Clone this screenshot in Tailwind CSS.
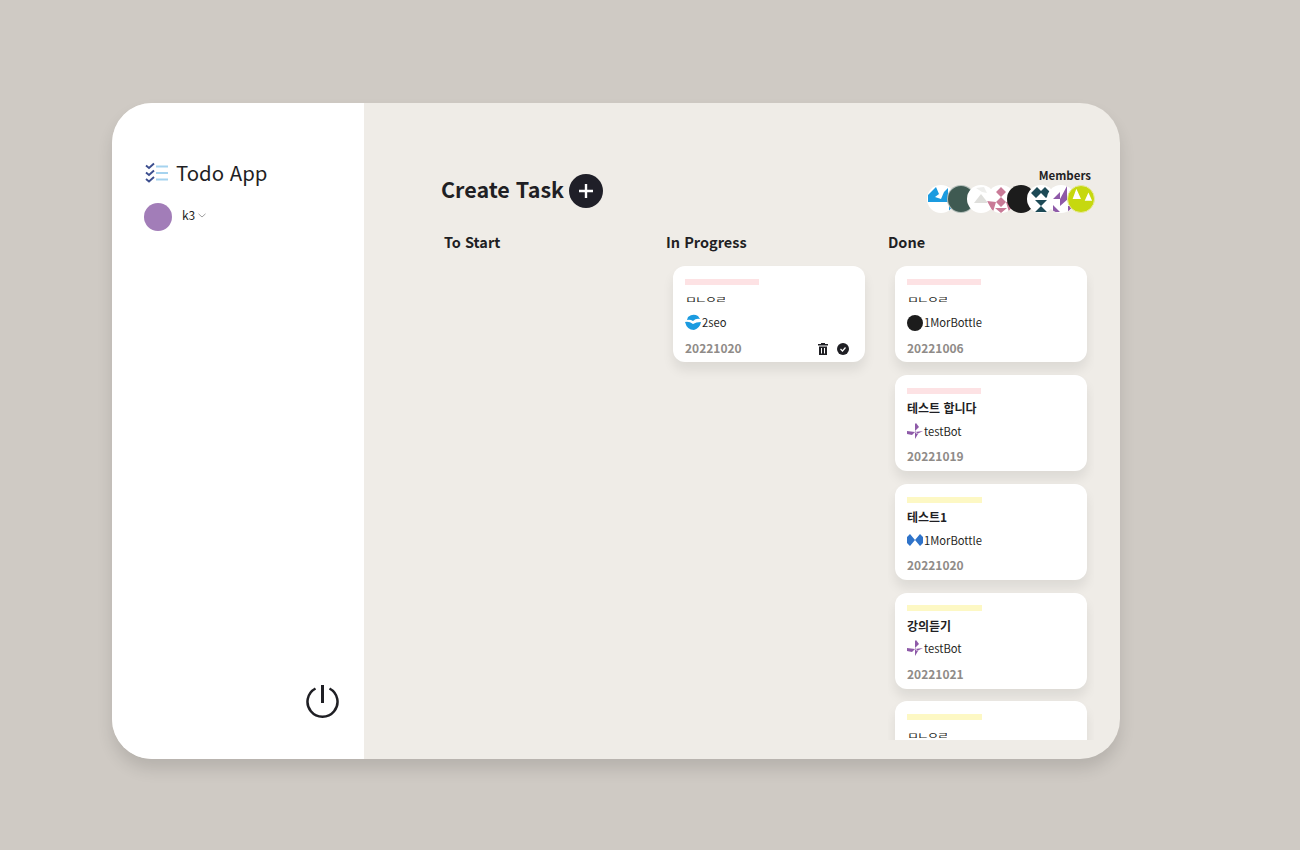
<!DOCTYPE html>
<html lang="ko">
<head>
<meta charset="utf-8">
<script src="https://cdn.jsdelivr.net/npm/@tailwindcss/browser@4"></script>
</head>
<body class="m-0 h-[850px] w-[1300px] overflow-hidden bg-[#cfcac4] font-['Noto_Sans_CJK_KR','Noto_Sans',sans-serif] text-[#1f1f24]">
<div class="pt-[103px] pl-[112px]">
  <div class="flex h-[656px] w-[1008px] overflow-hidden rounded-[40px] bg-[#efece7] shadow-[0_10px_16px_rgba(0,0,0,0.12)]">
    <aside class="flex w-[252px] shrink-0 flex-col bg-white pl-[32px] pt-[56px] pr-[24px] pb-[40px]">
      <div class="flex h-[28px] items-center gap-[7px]">
        <svg width="25" height="22" viewBox="0 0 25 22" fill="none">
          <path d="M2 3.500l3 2.500 5-4.500M2 10.500l3 2.500 5-4.500M2 17l3 2.500 5-4.500" stroke="#3d4f8f" stroke-width="1.900"/>
          <path d="M12 4.500h12M12 11h12M12 17.500h12" stroke="#a5d3ef" stroke-width="2"/>
        </svg>
        <span class="pb-[2px] text-[20.400px] leading-[28px]">Todo App</span>
      </div>
      <div class="mt-[16px] flex items-center">
        <div class="h-[28px] w-[28px] rounded-full bg-[#a27db8]"></div>
        <span class="ml-[10px] pb-[4px] text-[12px] leading-[16px]">k3</span>
        <svg class="mb-[4px] ml-[3px]" width="8" height="5" viewBox="0 0 8 5" fill="none"><path d="M.5.800L4 4 7.500.800" stroke="#777" stroke-width=".7"/></svg>
      </div>
      <div class="mt-auto flex justify-end">
        <svg width="34" height="34" viewBox="0 0 34 34" fill="none" stroke="#1f1f24" stroke-width="2.500">
          <path d="M9.500 3.500A15 15 0 1 0 23.500 3.500"/>
          <path d="M16.500 0v18" stroke-width="3"/>
        </svg>
      </div>
    </aside>
    <main class="flex min-w-0 flex-1 flex-col pl-[77px] pr-[26px] pt-[56px]">
      <div class="flex h-[70px] items-start justify-between">
        <div class="mt-[2px] flex h-[60px] items-center gap-[5px]">
          <span class="pb-[4px] text-[21.500px] leading-[32px] font-semibold">Create Task</span>
          <span class="flex h-[34px] w-[34px] items-center justify-center rounded-full bg-[#1f1f28]">
            <svg width="16" height="16" viewBox="0 0 16 16"><path d="M8 1v14M1 8h14" stroke="#fff" stroke-width="2.400"/></svg>
          </span>
        </div>
        <div class="flex flex-col items-end pt-[8px]">
          <span class="mr-[3px] text-[11.500px] leading-[16px] font-semibold">Members</span>
          <div class="mt-[2px] -mr-[1px] flex h-[28px]">
            <svg class="relative z-[1] rounded-full bg-white" width="28" height="28" viewBox="0 0 28 28"><path d="M1 10L9 2l3 7-4 3 6 2 3-7 4-4v14H1z" fill="#1b9be0"/><path d="M22 12h6v7l-6 7z" fill="#1b9be0"/></svg>
            <svg class="relative z-[2] -ml-[8px] rounded-full border border-white/60 bg-[#3f5a52]" width="28" height="28" viewBox="0 0 28 28"></svg>
            <svg class="relative z-[3] -ml-[8px] rounded-full bg-white" width="28" height="28" viewBox="0 0 28 28"><path d="M7 18L14 9l7 9z" fill="#dfdfdc"/><path d="M9 3l8-1 3 6-5-1z" fill="#eeeeec"/></svg>
            <svg class="relative z-[4] -ml-[8px] rounded-full bg-white" width="28" height="28" viewBox="0 0 28 28"><path d="M14 2l5 5-5 5-5-5zM14 12l5 5-5 5-5-5zM0 16l9 1-3 10zM28 16l-9 1 3 10zM8 23h12l-6 5z" fill="#c97a97"/></svg>
            <svg class="relative z-[5] -ml-[8px] rounded-full bg-[#1c1c1c]" width="28" height="28" viewBox="0 0 28 28"></svg>
            <svg class="relative z-[6] -ml-[8px] rounded-full bg-white" width="28" height="28" viewBox="0 0 28 28"><path d="M4 8l6-6 4 4 4-4 6 6-5 5-5-5-5 5zM8 15h12l-6 6 6 6H8l6-6z" fill="#1d4a56"/></svg>
            <svg class="relative z-[7] -ml-[8px] rounded-full bg-white" width="28" height="28" viewBox="0 0 28 28"><path d="M20 1v13h-7zM6 14l7-7v7zM13 14h8l-8 7zM6 20l7 7H6zM21 21l6-1-6 7z" fill="#8e5aa8"/></svg>
            <svg class="relative z-[8] -ml-[8px] rounded-full border border-[#e8e8a0] bg-[#c6d80f]" width="28" height="28" viewBox="0 0 28 28"><path d="M9 3l5 11H5zM22 7l4 9h-8z" fill="#fff"/></svg>
          </div>
        </div>
      </div>
      <div class="mt-[3px] grid min-h-0 flex-1 grid-cols-[222px_222px_1fr]">
        <section class="flex flex-col pl-[3px]">
          <h2 class="text-[14.500px] leading-[20px] font-semibold">To Start</h2>
        </section>
        <section class="flex flex-col pl-[3px]">
          <h2 class="text-[14.500px] leading-[20px] font-semibold">In Progress</h2>
          <div class="mt-[14px] pl-[7px]">
            <article class="relative h-[96px] w-[192px] rounded-[12px] bg-white px-[12px] pt-[13px] shadow-[0_8px_12px_rgba(0,0,0,0.08)]">
              <div class="h-[6px] w-[74px] bg-[#fde2e4]"></div>
              <div class="mt-[7px] h-[16px] text-[13px] leading-[16px]"><span class="inline-block origin-left scale-y-[0.7] tracking-[-2px]">ㅁㄴㅇㄹ</span></div>
              <div class="mt-[6px] flex h-[16px] items-center text-[11.200px] leading-[16px]">
                <svg width="16" height="16" viewBox="0 0 16 16"><path d="M3 3Q8-1 13 2l2 3Q11 4 8 7 5 5 2 6zM0 8q4-1 8 2 3-2 8-2-1 6-7 8-7 0-9-8z" fill="#1b9be0"/></svg>
                <span class="ml-[1px]">2seo</span>
              </div>
              <div class="mt-[10px] text-[12px] leading-[16px] font-semibold text-[#8f8b88]">20221020</div>
              <div class="absolute right-[16px] bottom-[6px] flex items-center gap-[8px]">
                <svg width="12" height="14" viewBox="0 0 12 14"><path d="M4 1h4v1h3v1.500H1V2h3zM2 4.500h8V13H2z" fill="#1f1f24"/><path d="M4.500 6v5.500M7.500 6v5.500" stroke="#fff"/></svg>
                <svg width="12" height="12" viewBox="0 0 12 12"><circle cx="6" cy="6" r="6" fill="#1f1f24"/><path d="M3.500 6l2 2 3-3.500" stroke="#fff" fill="none" stroke-width="1.200"/></svg>
              </div>
            </article>
          </div>
        </section>
        <section class="flex min-h-0 flex-col pl-[3px]">
          <h2 class="text-[14.500px] leading-[20px] font-semibold">Done</h2>
          <div class="mt-[14px] flex h-[474px] flex-col gap-[13px] overflow-hidden pl-[7px] pb-0">
            <article class="h-[96px] w-[192px] shrink-0 rounded-[12px] bg-white px-[12px] pt-[13px] shadow-[0_8px_12px_rgba(0,0,0,0.08)]">
              <div class="h-[6px] w-[74px] bg-[#fde2e4]"></div>
              <div class="mt-[7px] h-[16px] text-[13px] leading-[16px]"><span class="inline-block origin-left scale-y-[0.7] tracking-[-2px]">ㅁㄴㅇㄹ</span></div>
              <div class="mt-[6px] flex h-[16px] items-center text-[11.200px] leading-[16px]"><span class="mt-[2px] h-[16px] w-[16px] rounded-full bg-[#1c1c1c]"></span><span class="ml-[1px]">1MorBottle</span></div>
              <div class="mt-[10px] text-[12px] leading-[16px] font-semibold text-[#8f8b88]">20221006</div>
            </article>
            <article class="h-[96px] w-[192px] shrink-0 rounded-[12px] bg-white px-[12px] pt-[13px] shadow-[0_8px_12px_rgba(0,0,0,0.08)]">
              <div class="h-[6px] w-[74px] bg-[#fde2e4]"></div>
              <div class="mt-[5px] h-[18px] text-[12px] leading-[18px] font-semibold">테스트 합니다</div>
              <div class="mt-[6px] flex h-[16px] items-center text-[11.200px] leading-[16px]">
                <svg width="16" height="16" viewBox="0 0 16 16"><path d="M9 0l3 4-4 4V1zM0 8l8 1-3 3-5-1zM16 8l-8 1 2 2zM8 8l3 3-3 5z" fill="#8e5aa8"/></svg>
                <span class="ml-[1px]">testBot</span>
              </div>
              <div class="mt-[9px] text-[12px] leading-[16px] font-semibold text-[#8f8b88]">20221019</div>
            </article>
            <article class="h-[96px] w-[192px] shrink-0 rounded-[12px] bg-white px-[12px] pt-[13px] shadow-[0_8px_12px_rgba(0,0,0,0.08)]">
              <div class="h-[6px] w-[75px] bg-[#fdf8c4]"></div>
              <div class="mt-[5px] h-[18px] text-[12px] leading-[18px] font-semibold">테스트1</div>
              <div class="mt-[6px] flex h-[16px] items-center text-[11.200px] leading-[16px]">
                <svg width="16" height="16" viewBox="0 0 16 16"><path d="M0 5l3-3 5 6-5 6-3-3zM16 5l-3-3-5 6 5 6 3-3z" fill="#2f73c9"/></svg>
                <span class="ml-[1px]">1MorBottle</span>
              </div>
              <div class="mt-[9px] text-[12px] leading-[16px] font-semibold text-[#8f8b88]">20221020</div>
            </article>
            <article class="h-[96px] w-[192px] shrink-0 rounded-[12px] bg-white px-[12px] pt-[12px] shadow-[0_8px_12px_rgba(0,0,0,0.08)]">
              <div class="h-[6px] w-[75px] bg-[#fdf8c4]"></div>
              <div class="mt-[6px] h-[18px] text-[12px] leading-[18px] font-semibold">강의듣기</div>
              <div class="mt-[5px] flex h-[16px] items-center text-[11.200px] leading-[16px]">
                <svg width="16" height="16" viewBox="0 0 16 16"><path d="M9 0l3 4-4 4V1zM0 8l8 1-3 3-5-1zM16 8l-8 1 2 2zM8 8l3 3-3 5z" fill="#8e5aa8"/></svg>
                <span class="ml-[1px]">testBot</span>
              </div>
              <div class="mt-[10px] text-[12px] leading-[16px] font-semibold text-[#8f8b88]">20221021</div>
            </article>
            <article class="-mt-[1px] h-[96px] w-[192px] shrink-0 rounded-[12px] bg-white px-[12px] pt-[13px] shadow-[0_8px_12px_rgba(0,0,0,0.08)]">
              <div class="h-[6px] w-[75px] bg-[#fdf8c4]"></div>
              <div class="mt-[7px] h-[16px] text-[13px] leading-[16px]"><span class="inline-block origin-left scale-y-[0.7] tracking-[-2px]">ㅁㄴㅇㄹ</span></div>
            </article>
          </div>
        </section>
      </div>
    </main>
  </div>
</div>
</body>
</html>
